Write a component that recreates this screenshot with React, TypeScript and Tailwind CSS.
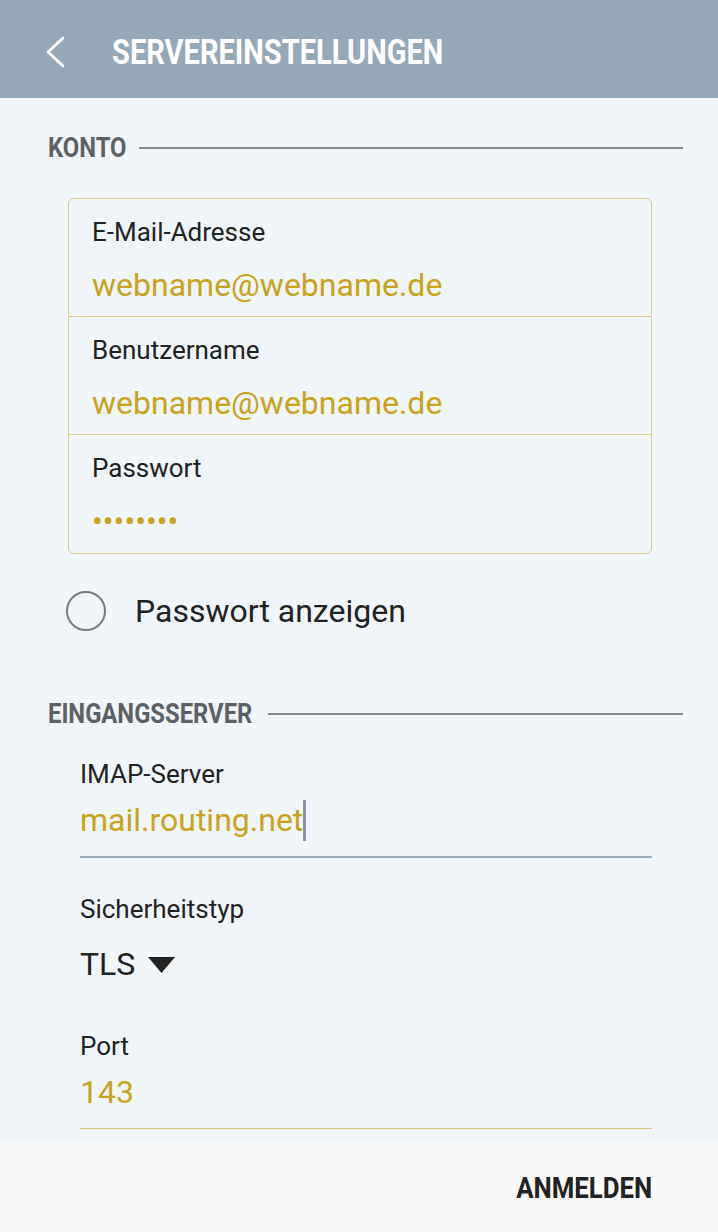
const gold = "text-[#c9a31b]";

const Field = ({ label, value, last }: { label: string; value: string; last?: boolean }) => (
  <div className={`h-[118px] pl-[23px] pt-[20px] ${last ? "" : "border-b border-[#dcc887]"}`}>
    <div className="text-[26px] leading-none text-[#222]">{label}</div>
    <div className={`mt-[24px] text-[32px] leading-none ${gold}`}>{value}</div>
  </div>
);

const SectionTitle = ({ title, width }: { title: string; width: string }) => (
  <div className="flex items-center pl-[48px] pr-[35px] h-[28px]">
    <span className={`${width} whitespace-nowrap`}>
      <span className="inline-block origin-left scale-x-[0.85] text-[28px] leading-none font-bold text-[#5e6164]">
        {title}
      </span>
    </span>
    <div className="flex-1 h-[2px] bg-[#86898c] ml-[12px] -mt-[2px]" />
  </div>
);

export default function App() {
  return (
    <div
      className="w-[718px] h-[1232px] flex flex-col overflow-hidden bg-[#f0f5f9]"
      style={{ fontFamily: "Roboto, 'Noto Sans', sans-serif" }}
    >
      <header className="h-[98px] shrink-0 bg-[#95a8b7] flex items-start pt-[35px]">
        <svg className="ml-[45px] mt-[1px]" width="20" height="32" viewBox="0 0 20 32" fill="none">
          <path d="M18 2 L3 16 L18 30" stroke="#fff" strokeWidth="2.6" strokeLinecap="round" strokeLinejoin="round" />
        </svg>
        <span className="ml-[47px] inline-block origin-left scale-x-[0.83] text-[35px] leading-none font-bold text-white whitespace-nowrap">
          SERVEREINSTELLUNGEN
        </span>
      </header>

      <main className="flex-1 overflow-hidden pt-[37px]">
        <SectionTitle title="KONTO" width="w-[79px]" />

        <div className="ml-[68px] mt-[35px] w-[584px] border border-[#dcc887] rounded-[6px]">
          <Field label="E-Mail-Adresse" value="webname@webname.de" />
          <Field label="Benutzername" value="webname@webname.de" />
          <Field label="Passwort" value="••••••••" last />
        </div>

        <div className="mt-[35px] h-[44px] flex items-center">
          <div className="ml-[66px] w-[40px] h-[40px] rounded-full border-2 border-[#7b7b7b]" />
          <span className="ml-[29px] text-[32px] leading-none text-[#222]">Passwort anzeigen</span>
        </div>

        <div className="mt-[68px]">
          <SectionTitle title="EINGANGSSERVER" width="w-[208px]" />
        </div>

        <div className="ml-[80px] w-[572px]">
          <div className="mt-[32px] text-[26px] leading-none text-[#222]">IMAP-Server</div>
          <div className="mt-[17px] flex items-center h-[32px]">
            <span className={`text-[32px] leading-none ${gold}`}>mail.routing.net</span>
            <span className="w-[3px] h-[41px] bg-[#8797ab]" />
          </div>
          <div className="mt-[20px] h-[2px] bg-[#9aabba]" />

          <div className="mt-[38px] text-[26px] leading-none text-[#222]">Sicherheitstyp</div>
          <div className="mt-[26px] flex items-center h-[32px]">
            <span className="text-[32px] leading-none text-[#222]">TLS</span>
            <svg className="ml-[13px] mt-[2px]" width="27" height="16" viewBox="0 0 27 16">
              <polygon points="0,0 27,0 13.5,16" fill="#222" />
            </svg>
          </div>

          <div className="mt-[53px] text-[26px] leading-none text-[#222]">Port</div>
          <div className={`mt-[17px] text-[32px] leading-none ${gold}`}>143</div>
          <div className="mt-[20px] h-[1px] bg-[#d6c07a]" />
        </div>
      </main>

      <footer className="h-[92px] shrink-0 bg-[#fafafa] flex items-center justify-end pr-[66px] pt-[4px]">
        <span className="inline-block origin-right scale-x-[0.86] text-[30px] leading-none font-bold text-[#222] whitespace-nowrap">
          ANMELDEN
        </span>
      </footer>
    </div>
  );
}
